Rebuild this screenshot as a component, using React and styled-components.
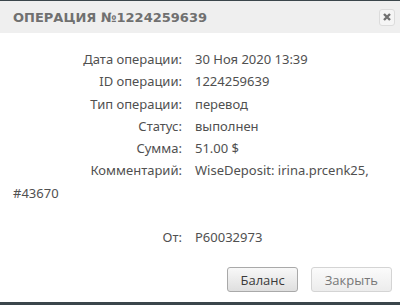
import React from "react";
import styled, { createGlobalStyle } from "styled-components";

const Global = createGlobalStyle`
  html, body { margin: 0; padding: 0; background: #3b464b; }
  body { width: 400px; height: 305px; overflow: hidden; }
`;

const Dialog = styled.div`
  box-sizing: border-box;
  width: 400px;
  height: 305px;
  background: #fff;
  border-top: 1px solid #3b464b;
  border-bottom: 3px solid #3b464b;
  display: flex;
  flex-direction: column;
  font-family: "Noto Sans", "DejaVu Sans", sans-serif;
`;

const Header = styled.div`
  height: 32px;
  background: #efefef;
  display: flex;
  align-items: center;
  justify-content: space-between;
  padding: 0 5px 0 13px;
`;

const Title = styled.div`
  font-family: "DejaVu Sans", sans-serif;
  font-weight: bold;
  font-size: 13px;
  letter-spacing: 0;
  color: #707070;
  padding-top: 1px;
`;

const CloseBtn = styled.button`
  box-sizing: border-box;
  width: 16px;
  height: 17px;
  padding: 0;
  border: 1px solid #dcdcdc;
  border-radius: 3px;
  background: #f5f5f5;
  display: flex;
  align-items: center;
  justify-content: center;
`;

const Body = styled.div`
  flex: 1;
  padding: 15px 13px 0 13px;
  font-size: 13px;
  line-height: 22.25px;
  color: #505050;
`;

const Row = styled.div`
  margin-top: ${(p) => (p.$gap ? "22.25px" : "0")};
`;

const Label = styled.span`
  display: inline-block;
  width: 169px;
  text-align: right;
  margin-right: 13px;
`;

const Footer = styled.div`
  display: flex;
  justify-content: flex-end;
  gap: 13px;
  padding: 0 8px 10px 0;
`;

const Button = styled.button`
  box-sizing: border-box;
  height: 25px;
  padding: 0 ${(p) => (p.$muted ? "13px" : "12px")};
  border-radius: 3px;
  border: 1px solid ${(p) => (p.$muted ? "#d4d4d4" : "#a9a9a9")};
  background: ${(p) =>
    p.$muted
      ? "linear-gradient(#fbfbfb, #ececec)"
      : "linear-gradient(#f8f8f8, #dfdfdf)"};
  color: ${(p) => (p.$muted ? "#777" : "#3a3a3a")};
  font-family: "Open Sans", sans-serif;
  font-size: 13px;
`;

const rows = [
  ["Дата операции:", "30 Ноя 2020 13:39"],
  ["ID операции:", "1224259639"],
  ["Тип операции:", "перевод"],
  ["Статус:", "выполнен"],
  ["Сумма:", "51.00 $"],
  ["Комментарий:", "WiseDeposit: irina.prcenk25, #43670"],
];

export default function App() {
  return (
    <>
      <Global />
      <Dialog>
        <Header>
          <Title>ОПЕРАЦИЯ №1224259639</Title>
          <CloseBtn aria-label="close">
            <svg width="8" height="8" viewBox="0 0 8 8">
              <path d="M1 1L7 7M7 1L1 7" stroke="#707070" strokeWidth="2.4" strokeLinecap="butt" />
            </svg>
          </CloseBtn>
        </Header>
        <Body>
          {rows.map(([l, v]) => (
            <Row key={l}>
              <Label>{l}</Label>
              {v}
            </Row>
          ))}
          <Row $gap>
            <Label>От:</Label>
            P60032973
          </Row>
        </Body>
        <Footer>
          <Button>Баланс</Button>
          <Button $muted>Закрыть</Button>
        </Footer>
      </Dialog>
    </>
  );
}
